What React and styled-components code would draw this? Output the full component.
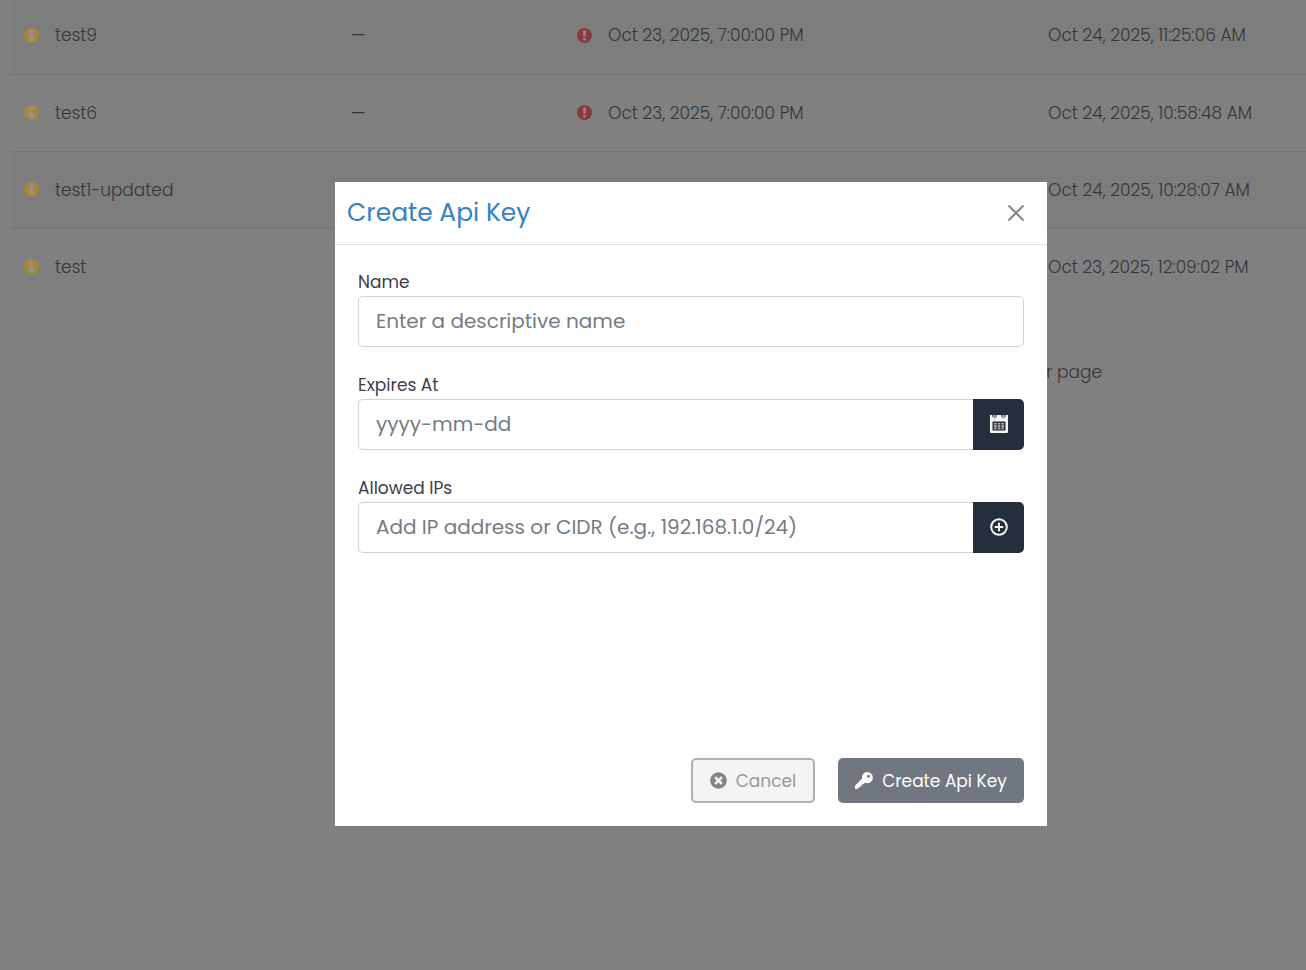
import { useState } from 'react'
import styled, { createGlobalStyle } from 'styled-components'
import { FaTimesCircle } from 'react-icons/fa'

const keys = [
  { name: 'test9', ips: '—', expires: 'Oct 23, 2025, 7:00:00 PM', created: 'Oct 24, 2025, 11:25:06 AM' },
  { name: 'test6', ips: '—', expires: 'Oct 23, 2025, 7:00:00 PM', created: 'Oct 24, 2025, 10:58:48 AM' },
  { name: 'test1-updated', created: 'Oct 24, 2025, 10:28:07 AM' },
  { name: 'test', created: 'Oct 23, 2025, 12:09:02 PM' },
]

const App = () => {
  const [name, setName] = useState('')
  const [expires, setExpires] = useState('')
  const [ip, setIp] = useState('')

  return (
    <>
      <GlobalStyle />
      <Page>
        <KeyTable>
          <colgroup>
            <Col $width='327px' />
            <Col $width='226px' />
            <Col $width='471px' />
            <Col />
          </colgroup>
          <tbody>
            {keys.map((key) => (
              <KeyRow key={key.name} item={key} />
            ))}
          </tbody>
        </KeyTable>
        <Pager>per page</Pager>
      </Page>

      <Overlay>
        <Dialog role='dialog' aria-labelledby='dialog-title'>
          <DialogHeader>
            <Title id='dialog-title'>Create Api Key</Title>
            <CloseButton type='button' aria-label='Close'>
              <CloseIcon />
            </CloseButton>
          </DialogHeader>
          <Form>
            <Field>
              <Label htmlFor='name'>Name</Label>
              <Input
                id='name'
                placeholder='Enter a descriptive name'
                value={name}
                onChange={(e) => setName(e.target.value)}
              />
            </Field>
            <Field>
              <Label htmlFor='expires'>Expires At</Label>
              <InputGroup>
                <Input
                  id='expires'
                  $joined
                  placeholder='yyyy-mm-dd'
                  value={expires}
                  onChange={(e) => setExpires(e.target.value)}
                />
                <AddonButton type='button' aria-label='Pick a date'>
                  <CalendarIcon />
                </AddonButton>
              </InputGroup>
            </Field>
            <Field>
              <Label htmlFor='ips'>Allowed IPs</Label>
              <InputGroup>
                <Input
                  id='ips'
                  $joined
                  placeholder='Add IP address or CIDR (e.g., 192.168.1.0/24)'
                  value={ip}
                  onChange={(e) => setIp(e.target.value)}
                />
                <AddonButton type='button' aria-label='Add IP'>
                  <PlusIcon />
                </AddonButton>
              </InputGroup>
            </Field>
            <Actions>
              <CancelButton type='button'>
                <FaTimesCircle size={17} color='#858585' />
                Cancel
              </CancelButton>
              <SubmitButton type='button'>
                <KeyIcon />
                Create Api Key
              </SubmitButton>
            </Actions>
          </Form>
        </Dialog>
      </Overlay>
    </>
  )
}

const KeyRow = ({ item }) => {
  return (
    <Row>
      <td>
        <CellContent>
          <InfoIcon />
          {item.name}
        </CellContent>
      </td>
      <td>{item.ips}</td>
      <td>
        {item.expires && (
          <CellContent>
            <AlertIcon />
            {item.expires}
          </CellContent>
        )}
      </td>
      <td>{item.created}</td>
    </Row>
  )
}

const InfoIcon = () => (
  <svg width='15' height='15' viewBox='0 0 15 15'>
    <circle cx='7.5' cy='7.5' r='7.5' fill='#a6873c' />
    <path fill='#979490' d='M6 2.300h3v2.400H6zM5 6h4v4.500h1v2H5v-2h1V8H5z' />
  </svg>
)

const AlertIcon = () => (
  <svg width='15' height='15' viewBox='0 0 15 15'>
    <circle cx='7.5' cy='7.5' r='7.5' fill='#8a3a3c' />
    <path fill='#928a8a' d='M6 2.500h3l-.4 6.200H6.400zM6.200 9.900h2.600v2.500H6.200z' />
  </svg>
)

const CloseIcon = () => (
  <svg width='18' height='18' viewBox='0 0 18 18' fill='none' stroke='#858585' strokeWidth='2'>
    <path d='M1.5 1.5l15 15M16.5 1.5l-15 15' />
  </svg>
)

const CalendarIcon = () => (
  <svg width='18' height='18' viewBox='0 0 18 18'>
    <path fill='#f3f3f3' d='M0 3h18v14a1 1 0 0 1-1 1H1a1 1 0 0 1-1-1z' />
    <path fill='#f3f3f3' d='M0 0h2a2.500 2.500 0 0 0 5 0h4a2.500 2.500 0 0 0 5 0h2v5H0z' />
    <path fill='#9a9ea6' d='M2.600 0h3.800v1.600a1.900 1.900 0 0 1-3.800 0zM11.600 0h3.800v1.600a1.900 1.900 0 0 1-3.800 0z' />
    <path fill='#252e3d' d='M2.500 6.500h13v9h-13z' />
    <path
      fill='#aeb2b9'
      d='M4 8h2.600v1.600H4zM7.700 8h2.600v1.600H7.700zM11.400 8H14v1.600h-2.600zM4 10.300h2.600v1.600H4zM7.700 10.300h2.600v1.600H7.700zM11.400 10.300H14v1.600h-2.600zM4 12.600h2.600v1.600H4zM7.700 12.600h2.600v1.600H7.700zM11.400 12.600H14v1.600h-2.600z'
    />
  </svg>
)

const PlusIcon = () => (
  <svg width='18' height='18' viewBox='0 0 18 18' fill='none' stroke='#f3f3f3' strokeWidth='2'>
    <circle cx='9' cy='9' r='7.8' />
    <path d='M9 4.7v8.6M4.7 9h8.6' />
  </svg>
)

const KeyIcon = () => (
  <svg width='18' height='18' viewBox='0 0 18 18'>
    <path
      fill='#fff'
      fillRule='evenodd'
      d='M12.2 0a5.6 5.6 0 0 1 0 11.3c-.8 0-1.6-.2-2.3-.5L8.700 12H7.200v1.600H5.600v1.500H4.200L2.600 17H0v-3.300l6.900-6.900A5.700 5.700 0 0 1 12.200 0zM13.500 2.800a1.500 1.500 0 1 0 0 3 1.500 1.500 0 0 0 0-3z'
    />
  </svg>
)

const GlobalStyle = createGlobalStyle`
  * {
    box-sizing: border-box;
  }

  body {
    margin: 0;
    background: #808080;
    font-family: Poppins, Inter, sans-serif;
  }

  button,
  input {
    font-family: inherit;
  }
`

const Page = styled.div`
  height: 100vh;
  overflow: hidden;
  padding-left: 10px;
  color: #343638;
  font-size: 17px;
  font-weight: 300;
`

const KeyTable = styled.table`
  width: 100%;
  margin-top: -3px;
  table-layout: fixed;
  border-collapse: collapse;
`

const Col = styled.col`
  width: ${({ $width }) => $width || 'auto'};
`

const Row = styled.tr`
  height: 77px;

  &:nth-child(odd) {
    background: #7d7d7d;
  }

  &:not(:last-child) {
    border-bottom: 1px solid #757575;
  }

  td {
    padding: 0 14px;
    white-space: nowrap;
  }
`

const CellContent = styled.div`
  display: flex;
  align-items: center;
  gap: 16px;
`

const Pager = styled.div`
  padding: 55px 204px 0 0;
  line-height: 24px;
  text-align: right;
`

const Overlay = styled.div`
  position: fixed;
  inset: 0;
  display: flex;
  justify-content: center;
  align-items: flex-start;
  padding: 182px 0 0 76px;
`

const Dialog = styled.div`
  width: 100%;
  max-width: 712px;
  background: #fff;
`

const DialogHeader = styled.div`
  display: flex;
  align-items: center;
  justify-content: space-between;
  padding: 12px;
  border-bottom: 1px solid #dee2e6;
`

const Title = styled.h2`
  margin: 0;
  color: #3582c4;
  font-size: 25px;
  font-weight: 400;
  line-height: 38px;
`

const CloseButton = styled.button`
  display: flex;
  padding: 10px;
  border: 0;
  background: none;
  cursor: pointer;
`

const Form = styled.form`
  display: flex;
  flex-direction: column;
  gap: 24px;
  padding: 23px;
`

const Field = styled.div`
  display: flex;
  flex-direction: column;
`

const Label = styled.label`
  color: #3d3d4e;
  font-size: 17px;
  line-height: 28px;
`

const InputGroup = styled.div`
  display: flex;
`

const Input = styled.input`
  flex: 1;
  min-width: 0;
  min-height: 51px;
  padding: 0 17px 2px;
  border: 1px solid #ced4da;
  border-radius: ${({ $joined }) => ($joined ? '5px 0 0 5px' : '5px')};
  border-right-width: ${({ $joined }) => ($joined ? '0' : '1px')};
  background: #fff;
  color: #495057;
  font-size: 20px;

  &::placeholder {
    color: #747c84;
    opacity: 1;
  }
`

const AddonButton = styled.button`
  display: flex;
  align-items: center;
  justify-content: center;
  width: 51px;
  padding-bottom: 3px;
  border: 0;
  border-radius: 0 5px 5px 0;
  background: #252e3d;
  cursor: pointer;
`

const Actions = styled.div`
  display: flex;
  justify-content: flex-end;
  gap: 23px;
  margin-top: 181px;
`

const ActionButton = styled.button`
  display: flex;
  align-items: center;
  justify-content: center;
  gap: 9px;
  height: 45px;
  border-radius: 5px;
  font-size: 17px;
  cursor: pointer;
`

const CancelButton = styled(ActionButton)`
  width: 124px;
  border: 2px solid #b0b0b0;
  background: #f4f4f4;
  color: #999;
`

const SubmitButton = styled(ActionButton)`
  width: 186px;
  border: 0;
  background: #707780;
  color: #fff;
`

export default App
